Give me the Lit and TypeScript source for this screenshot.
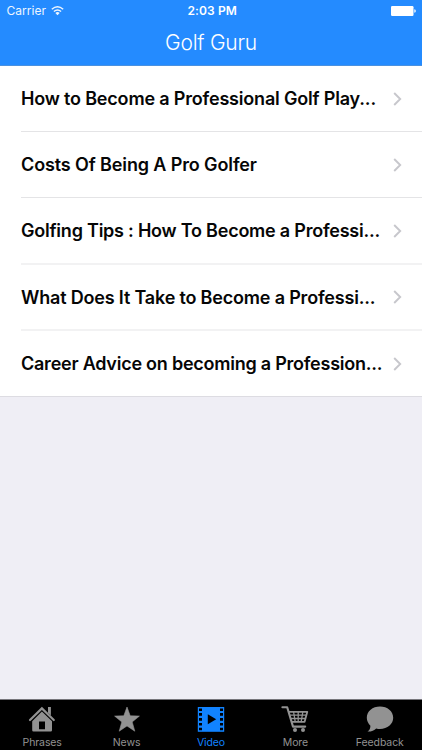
import { LitElement, html, css, svg } from "lit";
import { customElement } from "lit/decorators.js";
import { classMap } from "lit/directives/class-map.js";

const rows = [
  { title: "How to Become a Professional Golf Play...", cls: "r1" },
  { title: "Costs Of Being A Pro Golfer", cls: "r2" },
  { title: "Golfing Tips : How To Become a Professi...", cls: "r3" },
  { title: "What Does It Take to Become a Professi...", cls: "r4" },
  { title: "Career Advice on becoming a Profession...", cls: "r5" },
];

const icons = {
  home: svg`<path d="M2 14 13.9 2.4 25.8 14" fill="none" stroke="currentColor" stroke-width="2.2" stroke-linecap="round" stroke-linejoin="miter"/>
    <path d="M20 1h2.9v8.6L20 6.7z" fill="currentColor"/>
    <path fill-rule="evenodd" d="M13.9 5.6 24 15.2V24.3Q24 25.6 22.7 25.6H5.5Q4.2 25.6 4.2 24.3V15.2ZM11 15.6v7.6h6V15.6z" fill="currentColor"/>`,
  star: svg`<path d="M14 1 17.2 9.8 26.4 10.1 19.2 15.9 21.8 25.2 14 19.9 6.2 25.2 8.8 15.9 1.6 10.1 10.8 9.8Z" fill="currentColor" stroke="currentColor" stroke-width=".6" stroke-linejoin="round"/>`,
  film: svg`<path d="M.8 1h26.4v24.8H.8z" fill="currentColor"/>
    <path d="M2 2.5h3v2.4H2zM2 7.1h3v2.7H2zM2 12h3v2.7H2zM2 16.9h3v2.7H2zM2 21.8h3v2.4H2zM23 2.5h3v2.4h-3zM23 7.1h3v2.7h-3zM23 12h3v2.7h-3zM23 16.9h3v2.7h-3zM23 21.8h3v2.4h-3zM10.8 8.2 19.2 13.2 10.8 18.2z" fill="#000"/>`,
  cart: svg`<g fill="none" stroke="currentColor" stroke-linecap="round" stroke-linejoin="round">
    <path d="M1.4 1.3H6.2L12 20.6H24.2" stroke-width="2.1"/>
    <path d="M8 5.8H26.3L23.6 15.8H11" stroke-width="1.8"/>
    <path d="M9.4 9.1H25.2M10.4 12.5H24.4M12.6 6 14.2 15.6M17.2 6V15.6M21.8 6 20.2 15.6" stroke-width="1.3"/></g>
    <circle cx="14" cy="23.9" r="2" fill="currentColor"/><circle cx="22" cy="23.9" r="2" fill="currentColor"/>`,
  bubble: svg`<path d="M14 .6C21.4.6 27.2 5.4 27.2 11.8S21.4 23 14 23C12.6 23 11.4 22.9 10.2 22.5 8.3 24.6 5.4 25.7 1.5 25.6 3.5 24.1 4.4 22.4 4.4 19.7 2.2 17.7.8 14.9.8 11.8.8 5.4 6.6.6 14 .6Z" fill="currentColor"/>`,
};

const tabs = [
  { label: "Phrases", icon: icons.home },
  { label: "News", icon: icons.star },
  { label: "Video", icon: icons.film, active: true },
  { label: "More", icon: icons.cart },
  { label: "Feedback", icon: icons.bubble },
];

@customElement("app-root")
export class AppRoot extends LitElement {
  static styles = css`
    :host { display: flex; flex-direction: column; height: 750px; width: 422px; overflow: hidden;
      background: #efeef5; font-family: Inter, "Liberation Sans", sans-serif; }
    * { box-sizing: border-box; }
    .header { height: 66px; flex: none; background: #248bff; border-bottom: 1px solid #4a91e0; color: #fff; }
    .status { height: 22px; display: grid; grid-template-columns: 1fr auto 1fr; align-items: center; padding: 0 6px 0 6.5px; font-size: 12px; line-height: 22px; }
    .carrier { display: flex; align-items: center; gap: 5px; opacity: .92; letter-spacing: .05px; }
    .time { font-weight: 600; font-size: 12px; letter-spacing: .12px; padding-left: 2px; }
    .battery { justify-self: end; display: block; }
    .name { margin: 0; height: 41px; line-height: 41px; text-align: center; font-size: 21px; font-weight: 300; letter-spacing: -.25px; }
    .list { background: #fff; flex: none; }
    .row { height: 66px; display: flex; align-items: stretch; padding-left: 21px; }
    .body { flex: 1; min-width: 0; display: flex; align-items: center; justify-content: space-between; padding-right: 20px; border-bottom: 1px solid #e4e4e6; }
    .title { font-size: 18px; font-weight: 600; color: #060606; white-space: nowrap; line-height: 24px; }
    .chev { flex: none; display: block; }
    .r1 { letter-spacing: -.18px; }
    .r2 { letter-spacing: -.12px; }
    .r3 { height: 67px; letter-spacing: -.225px; }
    .r4 { letter-spacing: -.18px; }
    .r3 .title, .r4 .title { padding-top: 1px; }
    .r3 .body, .r4 .body { border-bottom: 2px solid #f2f2f3; }
    .r5 { border-bottom: 1px solid #dddce2; letter-spacing: -.24px; }
    .r5 .body { border: 0; }
    .space { flex: 1; }
    .tabs { height: 51px; flex: none; background: #000; border-top: 1px solid #77767b; display: grid; grid-template-columns: repeat(5, 1fr); }
    .tab { color: #929292; display: flex; flex-direction: column; align-items: center; padding-top: 6px; }
    .active { color: #1183ff; }
    .label { font-size: 10.5px; line-height: 14px; margin-top: 4px; letter-spacing: -.1px; }
    .icon { display: block; }
  `;

  render() {
    return html`
      <header class="header">
        <div class="status">
          <div class="carrier"><span>Carrier</span>
            <svg width="13" height="10" viewBox="0 0 13 10" fill="none" stroke="#fff" stroke-width="1.5">
              <path d="M.8 3.3Q6.5-1.7 12.2 3.3M2.9 5.5Q6.5 2.4 10.1 5.5"/>
              <path d="M4.4 7Q6.5 5.2 8.6 7L6.5 9.2z" fill="#fff" stroke="none"/>
            </svg>
          </div>
          <div class="time">2:03 PM</div>
          <svg class="battery" width="25" height="10" viewBox="0 0 25 10" fill="#fff"><rect width="22.5" height="10" rx="1.2"/><path d="M23.3 3.2Q24.8 3.5 24.8 5T23.3 6.8z"/></svg>
        </div>
        <h1 class="name">Golf Guru</h1>
      </header>
      <main class="list">
        ${rows.map((r) => html`<div class="row ${r.cls}"><div class="body">
          <span class="title">${r.title}</span>
          <svg class="chev" width="9" height="14" viewBox="0 0 9 14" fill="none" stroke="#c7c7cc" stroke-width="1.9"><path d="M1.2 1 7.2 7 1.2 13"/></svg>
        </div></div>`)}
      </main>
      <div class="space"></div>
      <nav class="tabs">
        ${tabs.map((t) => html`<div class=${classMap({ tab: true, active: !!t.active })}>
          <svg class="icon" width="28" height="26" viewBox="0 0 28 26">${t.icon}</svg>
          <span class="label">${t.label}</span>
        </div>`)}
      </nav>`;
  }
}
